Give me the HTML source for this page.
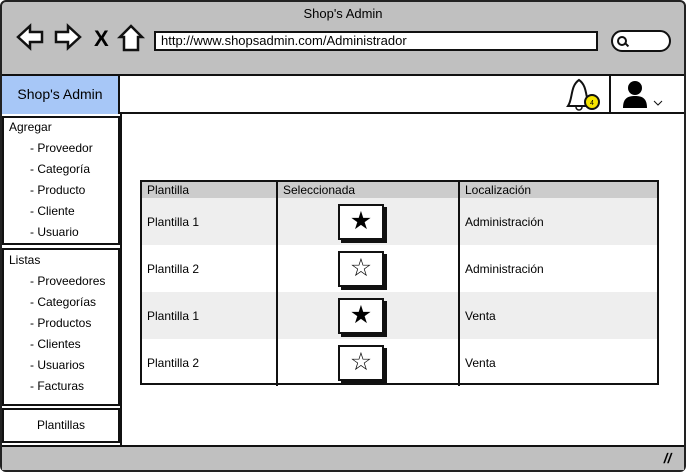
<!DOCTYPE html><html><head><style>
*{margin:0;padding:0;box-sizing:border-box}
body{width:686px;height:472px;background:#fff;font-family:"Liberation Sans",sans-serif;font-size:12px;color:#000;position:relative;overflow:hidden}
.a{position:absolute}
.frame{left:0;top:0;width:686px;height:472px;border:2px solid #222;border-radius:6px;background:#c0c0c0}
.b{border:2px solid #111;background:#fff}
.side div{position:absolute;left:26px}
td{padding:0 5px;border-right:2px solid #111;height:47px}
table{border-collapse:collapse}
.btn{width:46px;height:36px;border:2px solid #111;box-shadow:3px 3px 0 #111;margin:0 0 0 55px;background:#fff;display:flex;align-items:center;justify-content:center;font-size:25px;line-height:1}
</style></head><body>
<div class="a frame"></div>
<div class="a" style="left:0;top:6px;width:686px;text-align:center;font-size:13px">Shop's Admin</div>
<svg class="a" style="left:14px;top:22px" width="135" height="30"><g fill="#fff" stroke="#111" stroke-width="2.5">
<path d="M4 15 L16 4 V10 H28 V20 H16 V26 Z"/><path d="M66 15 L54 4 V10 H42 V20 H54 V26 Z"/>
<path d="M117 4 L106 15 H110 V28 H124 V15 H128 Z"/></g>
<text x="80" y="24" font-size="22" font-weight="bold" font-family="Liberation Sans">X</text></svg>
<div class="a b" style="left:154px;top:31px;width:444px;height:20px;font-size:13px;padding:0 5px;line-height:16px">http://www.shopsadmin.com/Administrador</div>
<div class="a b" style="left:611px;top:30px;width:60px;height:22px;border-radius:11px"><div class="a" style="left:4px;top:4px;width:10px;height:10px;border:2px solid #111;border-radius:50%"></div><div class="a" style="left:12px;top:12px;width:4px;height:2px;background:#111;transform:rotate(45deg)"></div></div>
<div class="a" style="left:2px;top:74px;width:682px;height:40px;background:#fff;border-top:2px solid #111;border-bottom:2px solid #111"></div>
<div class="a" style="left:2px;top:76px;width:118px;height:38px;background:#a7c7f7;border-right:2px solid #111;font-size:14px;line-height:36px;text-align:center">Shop's Admin</div>
<div class="a" style="left:609px;top:76px;width:2px;height:38px;background:#111"></div>
<svg class="a" style="left:563px;top:77px" width="42" height="36"><path d="M5 29 C10 22 7 9 16 3 C25 9 22 22 27 29 Z" fill="#fff" stroke="#111" stroke-width="2"/><path d="M13 30 a3 3 0 0 0 6 0" fill="none" stroke="#111" stroke-width="1.5"/><circle cx="29" cy="25" r="7" fill="#f5e400" stroke="#111" stroke-width="2"/><text x="27" y="28" font-size="7">4</text></svg>
<svg class="a" style="left:620px;top:80px" width="46" height="30"><circle cx="15" cy="8" r="7"/><path d="M3 28 C3 18 8 16 15 16 C22 16 27 18 27 28 Z"/><path d="M34 21 L38 25 L42 21" fill="none" stroke="#111"/></svg>
<div class="a" style="left:2px;top:114px;width:682px;height:331px;background:#fff"></div>
<div class="a" style="left:120px;top:114px;width:2px;height:331px;background:#111"></div>
<div class="a b side" style="left:2px;top:116px;width:118px;height:129px"><div style="left:5px;top:2px">Agregar</div><div style="top:23px">- Proveedor</div><div style="top:44px">- Categoría</div><div style="top:65px">- Producto</div><div style="top:86px">- Cliente</div><div style="top:107px">- Usuario</div></div>
<div class="a b side" style="left:2px;top:248px;width:118px;height:158px"><div style="left:5px;top:3px">Listas</div><div style="top:24px">- Proveedores</div><div style="top:45px">- Categorías</div><div style="top:66px">- Productos</div><div style="top:87px">- Clientes</div><div style="top:108px">- Usuarios</div><div style="top:129px">- Facturas</div></div>
<div class="a b" style="left:2px;top:408px;width:118px;height:35px;text-align:center;line-height:31px">Plantillas</div>
<div class="a" style="left:2px;top:445px;width:682px;height:25px;background:#c0c0c0;border-top:2px solid #111"></div>
<div class="a" style="left:664px;top:450px;font-size:14px;font-weight:bold;transform:skewX(-10deg)">//</div>
<div class="a" style="left:140px;top:180px;width:519px;height:205px;border:2px solid #111">
<table style="width:515px"><tr style="background:#ccc"><td style="height:16px;width:135px">Plantilla</td><td style="height:16px;width:182px">Seleccionada</td><td style="height:16px;border:none">Localización</td></tr>
<tr style="background:#eee"><td>Plantilla 1</td><td><div class="btn">★</div></td><td style="border:none">Administración</td></tr>
<tr><td>Plantilla 2</td><td><div class="btn">☆</div></td><td style="border:none">Administración</td></tr>
<tr style="background:#eee"><td>Plantilla 1</td><td><div class="btn">★</div></td><td style="border:none">Venta</td></tr>
<tr><td>Plantilla 2</td><td><div class="btn">☆</div></td><td style="border:none">Venta</td></tr></table></div>
</body></html>
